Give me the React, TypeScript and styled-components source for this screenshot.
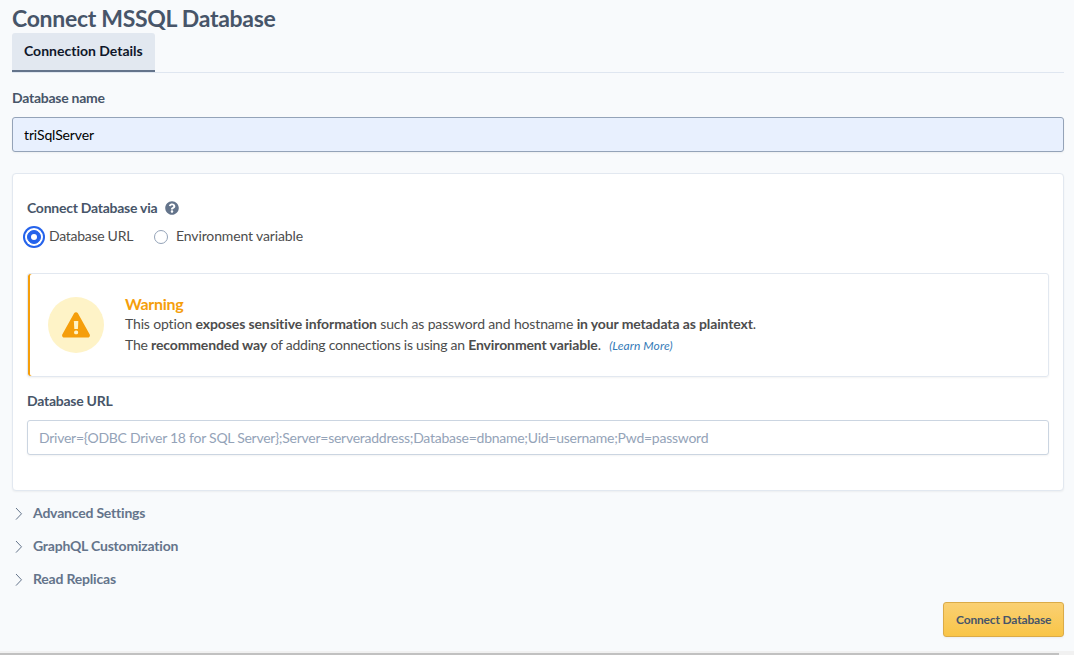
import React from "react";
import styled, { createGlobalStyle } from "styled-components";
import { FaQuestionCircle } from "react-icons/fa";

const GlobalStyle = createGlobalStyle`
  * { box-sizing: border-box; }
  body {
    margin: 0;
    background: #f8fafc;
    color: #4d4d4d;
    font-family: Lato, sans-serif;
    font-size: 14px;
    line-height: 20px;
    font-variant-ligatures: none;
  }
`;

const boldFace = `
  font-family: Lato, sans-serif;
  font-weight: 700;
`;

const Page = styled.div`
  height: 655px;
  display: flex;
  flex-direction: column;
  overflow: hidden;
`;

const Content = styled.main`
  flex: 1;
  display: flex;
  flex-direction: column;
  padding: 0 10px 0 12px;
`;

const Title = styled.h1`
  ${boldFace}
  margin: 0;
  height: 33px;
  padding-top: 2px;
  font-size: 23px;
  line-height: 32px;
  letter-spacing: -0.3px;
  color: #475569;
  white-space: nowrap;
`;

const Tabs = styled.nav`
  display: flex;
  height: 40px;
  border-bottom: 1px solid #dfe6f0;
`;

const Tab = styled.button`
  ${boldFace}
  width: 143px;
  height: 39px;
  padding: 0 0 2px 12px;
  border: 0;
  border-bottom: 2px solid #64748b;
  border-radius: 3px 3px 0 0;
  background: #e2e8f0;
  color: #0f172a;
  font-size: 14px;
  font-variant-ligatures: none;
  text-align: left;
  white-space: nowrap;
`;

const Label = styled.label`
  ${boldFace}
  display: flex;
  align-items: center;
  height: 20px;
  font-size: 14px;
  letter-spacing: -0.25px;
  color: #475569;
`;

const TextInput = styled.input<{ $filled?: boolean }>`
  display: block;
  width: 100%;
  height: 35px;
  margin-top: 9px;
  padding: 0 11px 1px;
  border: 1px solid ${(p) => (p.$filled ? "#94a3b8" : "#cbd5e1")};
  border-radius: 3px;
  outline: 0;
  background: ${(p) => (p.$filled ? "#e8f0fe" : "#ffffff")};
  box-shadow: 0 1px 2px rgba(0, 0, 0, 0.05);
  color: #000;
  font-family: Lato, sans-serif;
  font-size: 14px;
  letter-spacing: ${(p) => (p.$filled ? -0.14 : -0.255)}px;
  &::placeholder { color: #94a3b8; opacity: 1; }
`;

const NameField = styled.div`
  margin-top: 15px;
`;

const Card = styled.section`
  height: 318px;
  margin-top: 21px;
  padding: 24px 14px 0;
  border: 1px solid #e2e8f0;
  border-radius: 4px;
  background: #fff;
  box-shadow: 0 1px 2px rgba(0, 0, 0, 0.05);
`;

const HelpIcon = styled(FaQuestionCircle)`
  width: 14px;
  height: 14px;
  margin-left: 8px;
  color: #64748b;
`;

const RadioGroup = styled.div`
  display: flex;
  margin-top: 9px;
  height: 20px;
`;

const RadioOption = styled.label<{ $spacing: number }>`
  display: flex;
  align-items: center;
  gap: 8px;
  letter-spacing: ${(p) => p.$spacing}px;
  margin-right: 21px;
  white-space: nowrap;
`;

const OptionText = styled.span`
  padding-bottom: 2px;
`;

const Radio = styled.span<{ $checked?: boolean }>`
  flex: none;
  display: flex;
  align-items: center;
  justify-content: center;
  width: 14px;
  height: 14px;
  border-radius: 50%;
  border: 1px solid ${(p) => (p.$checked ? "#2563eb" : "#94a3b8")};
  background: ${(p) => (p.$checked ? "#2563eb" : "#fff")};
  box-shadow: ${(p) => (p.$checked ? "0 0 0 2px #fff, 0 0 0 4px #2563eb" : "none")};
  &::after {
    content: "";
    width: 6px;
    height: 6px;
    border-radius: 50%;
    background: #fff;
  }
`;

const Alert = styled.div`
  display: flex;
  align-items: center;
  height: 104px;
  margin: 26px 0 14px;
  padding-left: 20px;
  border: 1px solid #e2e8f0;
  border-radius: 3px;
  box-shadow: inset 2px 0 0 #f59e0b, 0 1px 2px rgba(0, 0, 0, 0.05);
`;

const AlertBadge = styled.div`
  display: flex;
  align-items: center;
  justify-content: center;
  width: 56px;
  height: 56px;
  border-radius: 50%;
  background: #fef3c7;
`;

const AlertBody = styled.div`
  margin-left: 21px;
  padding-bottom: 1px;
  line-height: 21px;
  white-space: nowrap;
`;

const AlertTitle = styled.div`
  ${boldFace}
  font-size: 16px;
  letter-spacing: -0.3px;
  line-height: 19px;
  color: #f59e0b;
`;

const AlertLine = styled.div<{ $spacing: number }>`
  letter-spacing: ${(p) => p.$spacing}px;
`;

const Strong = styled.strong`
  ${boldFace}
  letter-spacing: -0.12px;
`;

const LearnMore = styled.a`
  margin-left: 5px;
  font-size: 12px;
  font-style: italic;
  letter-spacing: 0.1px;
  color: #337ab7;
`;

const Sections = styled.div`
  display: flex;
  flex-direction: column;
  gap: 13px;
  margin-top: 12px;
`;

const SectionToggle = styled.div`
  ${boldFace}
  display: flex;
  align-items: center;
  height: 20px;
  gap: 10px;
  padding-left: 3px;
  font-size: 14px;
  letter-spacing: -0.2px;
  color: #64748b;
`;

const Actions = styled.div`
  display: flex;
  justify-content: flex-end;
  margin-top: 13px;
`;

const PrimaryButton = styled.button`
  ${boldFace}
  width: 121px;
  height: 35px;
  padding: 0 0 0 12px;
  border: 1px solid #dbab48;
  border-radius: 3px;
  background: linear-gradient(#fad073, #f9c548);
  box-shadow: 0 1px 2px rgba(0, 0, 0, 0.05);
  color: #475569;
  font-size: 12px;
  letter-spacing: -0.16px;
  text-align: left;
  white-space: nowrap;
`;

const ScrollTrack = styled.div`
  height: 4px;
  padding: 2px 15px 0 0;
  background: #f1f1f1;
`;

const ScrollThumb = styled.div`
  height: 2px;
  background: #c1c1c1;
`;

const Chevron = () => (
  <svg width="8" height="14" viewBox="0 0 8 14" fill="none" stroke="#64748b">
    <path d="M1 2 6.5 7.8 1 13.6" />
  </svg>
);

const WarningIcon = () => (
  <svg width="28" height="26" viewBox="0 0 28 26">
    <path
      fill="#f59e0b"
      d="M12.1 1.3c.9-1.5 2.9-1.5 3.8 0l11.7 21c.9 1.6-.2 3.2-1.9 3.2H2.3c-1.7 0-2.8-1.600-1.9-3.2z"
    />
    <path fill="#fef3c7" d="M12.5 9h3.2c.4 0 .6.2.6.6l-.4 7.4h-3.6l-.4-7.4c0-.4.2-.6.6-.6z" />
    <rect fill="#fef3c7" x="12.1" y="18.5" width="4" height="3.8" rx="1.5" />
  </svg>
);

const sections = ["Advanced Settings", "GraphQL Customization", "Read Replicas"];

export default function App() {
  return (
    <Page>
      <GlobalStyle />
      <Content>
        <Title>Connect MSSQL Database</Title>
        <Tabs>
          <Tab>Connection Details</Tab>
        </Tabs>
        <NameField>
          <Label>Database name</Label>
          <TextInput $filled defaultValue="triSqlServer" />
        </NameField>
        <Card>
          <Label>
            Connect Database via
            <HelpIcon />
          </Label>
          <RadioGroup>
            <RadioOption $spacing={-0.28}>
              <Radio $checked />
              <OptionText>Database URL</OptionText>
            </RadioOption>
            <RadioOption $spacing={-0.13}>
              <Radio />
              <OptionText>Environment variable</OptionText>
            </RadioOption>
          </RadioGroup>
          <Alert>
            <AlertBadge>
              <WarningIcon />
            </AlertBadge>
            <AlertBody>
              <AlertTitle>Warning</AlertTitle>
              <AlertLine $spacing={-0.15}>
                This option <Strong>exposes sensitive information</Strong> such as password and hostname{" "}
                <Strong>in your metadata as plaintext</Strong>.
              </AlertLine>
              <AlertLine $spacing={-0.24}>
                The <Strong>recommended way</Strong> of adding connections is using an{" "}
                <Strong>Environment variable</Strong>. <LearnMore>(Learn More)</LearnMore>
              </AlertLine>
            </AlertBody>
          </Alert>
          <Label>Database URL</Label>
          <TextInput placeholder="Driver={ODBC Driver 18 for SQL Server};Server=serveraddress;Database=dbname;Uid=username;Pwd=password" />
        </Card>
        <Sections>
          {sections.map((name) => (
            <SectionToggle key={name}>
              <Chevron />
              {name}
            </SectionToggle>
          ))}
        </Sections>
        <Actions>
          <PrimaryButton>Connect Database</PrimaryButton>
        </Actions>
      </Content>
      <ScrollTrack>
        <ScrollThumb />
      </ScrollTrack>
    </Page>
  );
}
